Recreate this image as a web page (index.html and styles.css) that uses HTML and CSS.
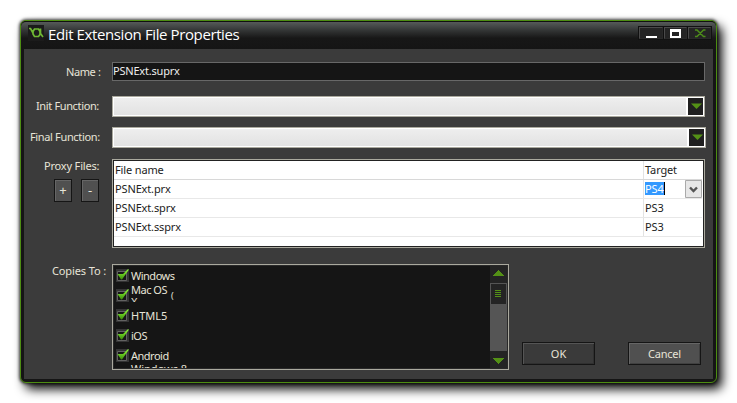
FILE: index.html
```html
<!DOCTYPE html>
<html lang="en">
<head>
<meta charset="utf-8">
<title>Edit Extension File Properties</title>
<link rel="stylesheet" href="styles.css">
</head>
<body>
<main class="window">
  <header class="titlebar">
    <svg class="logo" width="16" height="16" viewBox="0 0 16 16"><rect width="16" height="16" fill="#1b1b1b"/><g fill="none" stroke="#6fb833" stroke-width="1.700"><path d="M6.500 4h4L12 6.500v3L10.500 11.500h-4L5 9V6.500zM1 3.500h1.500L5 8M12.500 3.500v5l2.500 3.500"/></g></svg>
    <h1>Edit Extension File Properties</h1>
    <div class="controls">
      <span class="control"><svg width="22" height="12"><path d="M6 9h11v2H6z" fill="#fff"/></svg></span>
      <span class="control"><svg width="21" height="12"><path d="M5 2h11v9H5zM7 5v4h7V5z" fill="#fff" fill-rule="evenodd"/></svg></span>
      <span class="control"><svg width="21" height="12"><path d="M6 3h2l6.500 6.500h2M6 9.500h2L14.500 3h2" fill="none" stroke="#4d8d19" stroke-width="1.400"/></svg></span>
    </div>
  </header>
  <form class="content">
    <div class="row name-row"><label class="lb-name">Name :</label><div class="input">PSNExt.suprx</div></div>
    <div class="row init-row"><label class="lb-init">Init Function:</label><div class="combo"><i></i><span><svg width="15" height="17"><path d="M3 5.500h11L8.500 11z" fill="#549116"/></svg></span></div></div>
    <div class="row final-row"><label class="lb-final">Final Function:</label><div class="combo wide"><i></i><span><svg width="15" height="17"><path d="M3 5.500h11L8.500 11z" fill="#549116"/></svg></span></div></div>
    <div class="row proxy-row">
      <div class="proxy-side"><label class="lb-proxy">Proxy Files:</label><div class="mini-buttons"><b>+</b><b>-</b></div></div>
      <div class="table">
        <div class="tr head"><span>File name</span><span>Target</span></div>
        <div class="tr"><span>PSNExt.prx</span><span class="editing"><em>PS4</em><svg class="drop" width="17" height="18"><path d="M.5.5h16v17H.5z" fill="#e7e7e7" stroke="#aaa"/><path d="m5 7.500 3.500 3.500L12 7.500" fill="none" stroke="#555" stroke-width="2.400"/></svg></span></div>
        <div class="tr"><span>PSNExt.sprx</span><span>PS3</span></div>
        <div class="tr"><span>PSNExt.ssprx</span><span>PS3</span></div>
      </div>
    </div>
    <div class="row copies-row">
      <label class="lb-copies">Copies To :</label>
      <div class="list">
        <svg width="0" height="0" class="defs"><defs><linearGradient id="g" x2="0" y2="1"><stop stop-color="#8cff36"/><stop offset="1" stop-color="#3d8c0b"/></linearGradient><symbol id="check" viewBox="0 0 14 13"><path d="M0 0h13v13H0z" fill="#353535"/><path d="M1.500 2.500h9v9h-9z" fill="#171717" stroke="#626262"/><path d="M1.500 5h5.500l4.500-4.500H13L6 10.500H5z" fill="url(#g)"/></symbol></defs></svg>
        <div class="items">
          <div class="item"><svg width="14" height="13"><use href="#check"/></svg><span>Windows</span></div>
          <div class="item"><svg width="14" height="13"><use href="#check"/></svg><span class="clip"><span>Mac OS</span><span>X</span></span><span class="fragment">(</span></div>
          <div class="item"><svg width="14" height="13"><use href="#check"/></svg><span class="plain">HTML5</span></div>
          <div class="item"><svg width="14" height="13"><use href="#check"/></svg><span>iOS</span></div>
          <div class="item"><svg width="14" height="13"><use href="#check"/></svg><span>Android</span></div>
          <div class="item last"><span>Windows 8</span></div>
        </div>
        <svg class="scroll" width="17" height="102" shape-rendering="crispEdges"><path d="M0 0h17v102H0z" fill="#555"/><path d="M0 0h17v17H0zM0 85h17v17H0z" fill="#242424"/><path d="M.5 17.500h16v21H.5z" fill="#242424" stroke="#555"/><path d="M3 10 8.500 4 14 10zM3 92h11l-5.500 6z" fill="#549116"/><path d="M5 24.500h6M5 26.500h6M5 28.500h6M5 30.500h6" stroke="#549116"/></svg>
      </div>
      <div class="actions"><button type="button" class="ok">OK</button><button type="button" class="cancel">Cancel</button></div>
    </div>
  </form>
</main>
</body>
</html>
```
FILE: styles.css
```css
* { box-sizing: border-box; }
body { margin: 0; padding: 20px; width: 737px; height: 403px; overflow: hidden; background: #fff; font: 11px/14px "Noto Sans", sans-serif; color: #e7e4d8; }
.window { width: 697px; height: 363px; border: 1px solid #4d8d12; border-radius: 6px; padding: 0 3px 4px; background: #151515; box-shadow: 5px 6px 11px #000, 0 0 3px 1px #555; }
.titlebar { height: 28px; margin: 0 -3px; padding-left: 7px; display: flex; align-items: flex-start; border-radius: 5px 5px 0 0; border-top: 1px solid #111; background: linear-gradient(#565b59, #303232 34%, #171717 60%, #151515); }
.logo { margin-top: 3px; }
h1 { margin: 1px 0 0 4px; font: 15px/22px "Open Sans", sans-serif; color: #fff; white-space: nowrap; letter-spacing: -.39px; }
.controls { display: flex; gap: 1px; margin: 4px 4px 0 auto; height: 14px; background: #101010; border: 1px solid #111; }
.control { background: #242424; border: 1px solid #4a4a4a; border-right-color: #292929; border-bottom-color: #292929; height: 12px; }
.control svg { display: block; margin-top: -1px; }
.content { height: 330px; padding: 13px 0 0 6px; background: #3b3b3b; }
.row { display: flex; }
.row > label, .proxy-side { width: 82px; flex: none; }
label { white-space: nowrap; }
.name-row { height: 34px; }
.name-row label { padding: 3px 0 0 36px; letter-spacing: -.4px; }
.input { width: 593px; height: 19px; background: #151515; border: 1px solid #686868; padding: 1px 0; color: #eee; letter-spacing: -.2px; }
.init-row { height: 31px; }
.init-row label { padding: 3px 0 0 6px; letter-spacing: -.36px; }
.final-row { height: 32px; }
.final-row label { padding-top: 3px; letter-spacing: -.35px; }
.combo { width: 593px; height: 21px; border: 1px solid #aaa99e; background: #fff; padding: 1px; display: flex; }
.wide { width: 594px; }
.combo i { flex: 1; background: linear-gradient(#eee, #e2e2e2); margin-right: 2px; }
.combo span { width: 15px; height: 17px; background: #202020; }
.combo svg { display: block; }
.proxy-row { height: 105px; }
.lb-proxy { display: block; padding-left: 14px; letter-spacing: -.18px; }
.mini-buttons { display: flex; gap: 9px; margin: 6px 0 0 24px; }
.mini-buttons b { width: 18px; height: 23px; border: 1px solid #151515; background: #505050; font-weight: 400; text-align: center; font-size: 13px; line-height: 21px; box-shadow: inset 1px 1px #666; }
.table { width: 593px; height: 89px; border: 1px solid #aaa99e; outline: 1px solid #222; outline-offset: -2px; background: #fff; color: #222; padding: 1px 2px 1px 1px; }
.tr { height: 19px; display: flex; border-bottom: 1px solid #e8e8e8; line-height: 18px; letter-spacing: -.14px; }
.head { border-color: #d8d8d8; }
.tr > span:first-child { width: 530px; padding-left: 1px; border-right: 1px solid #e3e3e3; }
.tr > span:last-child { padding-left: 1px; }
.editing { flex: 1; display: flex; align-items: flex-start; }
.editing em { height: 13px; margin-top: 2px; line-height: 13px; font-style: normal; background: #3399ff; color: #fff; border-right: 1px solid #000; }
.drop { margin-left: auto; }
.copies-row label { padding: 0 0 0 22px; letter-spacing: -.12px; }
.list { width: 397px; height: 106px; border: 1px solid #aaa99e; padding: 1px; display: flex; background: #151515; overflow: hidden; box-shadow: inset 0 0 0 1px #292929; }
.defs { position: absolute; }
.items { flex: 1; height: 102px; overflow: hidden; padding: 3px 0 0 2px; letter-spacing: -.5px; }
.item { height: 20px; display: flex; white-space: nowrap; }
.item svg { flex: none; margin-right: 1px; }
.plain { letter-spacing: 0; }
.clip { width: 40px; height: 18px; margin-top: -5px; overflow: hidden; }
.clip > span { display: block; height: 12px; line-height: 12px; }
.fragment { font-size: 9px; line-height: 13px; }
.last { padding-left: 15px; margin-top: -7px; letter-spacing: 0; }
.actions { display: flex; gap: 33px; padding: 78px 0 0 13px; }
button { width: 73px; height: 23px; padding: 0; font: inherit; line-height: 19px; border: 1px solid #151515; background: #3a3a3a; color: #e7e4d8; box-shadow: inset 1px 1px #555, inset -1px -1px #303030; }
.cancel { background: #505050; letter-spacing: -.2px; box-shadow: inset 1px 1px #666, inset -1px -1px #404040; }
```
